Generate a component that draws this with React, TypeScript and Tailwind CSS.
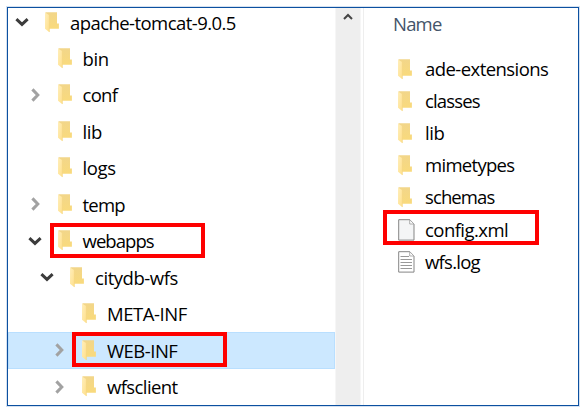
type Toggle = 'open' | 'closed' | 'none';

function Folder() {
  return (
    <svg className="block shrink-0" width="15" height="21" viewBox="0 0 15 21">
      <defs>
        <linearGradient id="flap" x1="0" y1="0" x2="1" y2="1">
          <stop offset="0" stopColor="#ffeebb" />
          <stop offset="1" stopColor="#ffe08a" />
        </linearGradient>
        <linearGradient id="back" x1="0" y1="0" x2="0" y2="1">
          <stop offset="0" stopColor="#f2d68a" />
          <stop offset="1" stopColor="#f9da7c" />
        </linearGradient>
      </defs>
      <path d="M.5 .3H12V11.6H13.9V16.8H4.5L.5 16.8Z" fill="url(#back)" />
      <path d="M0 .5 4.4 3.2V20.2L0 16.8Z" fill="url(#flap)" />
      <path d="M4.4 3.2V20" stroke="#f1d382" strokeWidth=".6" />
    </svg>
  );
}

function Doc({ lined }: { lined?: boolean }) {
  return (
    <svg className="block shrink-0" width="17" height="22" viewBox="0 0 17 22">
      <path d="M.7.7H11.8L16 5V21.1H.7Z" fill={lined ? '#fff' : '#f4f5f6'} stroke="#858585" strokeWidth="1" />
      <path d="M11.7.9V5H15.8" fill="#fff" stroke="#999" strokeWidth=".8" />
      {lined && <path d="M2.5 5.5H11M2.5 8.5H14M2.5 11.5H14M2.5 14.5H14M2.5 17.5H14" stroke="#999" strokeWidth="1.2" />}
    </svg>
  );
}

function Chevron({ state }: { state: Toggle }) {
  return (
    <svg className="block shrink-0" width="16" height="16" viewBox="0 0 16 16" fill="none" strokeWidth="3">
      {state === 'open' && <path d="M2.4 5.2 8 10.4 13.6 5.2" stroke="#3c3c3c" />}
      {state === 'closed' && <path d="M5.4 2.4 10.8 8 5.4 13.6" stroke="#a2a2a2" />}
    </svg>
  );
}

type TreeRow = { label: string; toggle: Toggle; indent: string; row?: string; spacing: string; boxed?: boolean };

const tree: TreeRow[] = [
  { label: 'apache-tomcat-9.0.5', toggle: 'open', indent: 'pl-[6px]', row: 'h-[32px] pb-[4px]', spacing: 'tracking-[-0.56px]' },
  { label: 'bin', toggle: 'none', indent: 'pl-[18.5px]', spacing: 'tracking-[-0.4px]' },
  { label: 'conf', toggle: 'closed', indent: 'pl-[18.5px]', spacing: 'tracking-[-0.7px]' },
  { label: 'lib', toggle: 'none', indent: 'pl-[18.5px]', spacing: 'tracking-[-0.4px]' },
  { label: 'logs', toggle: 'none', indent: 'pl-[18.5px]', spacing: 'tracking-[-0.4px]' },
  { label: 'temp', toggle: 'closed', indent: 'pl-[18.5px]', spacing: 'tracking-[-0.8px]' },
  { label: 'webapps', toggle: 'open', indent: 'pl-[18.5px]', spacing: 'tracking-[-0.95px]', boxed: true },
  { label: 'citydb-wfs', toggle: 'open', indent: 'pl-[31px]', spacing: 'tracking-[-0.45px]' },
  { label: 'META-INF', toggle: 'none', indent: 'pl-[43px]', spacing: 'tracking-[-0.45px]' },
  { label: 'WEB-INF', toggle: 'closed', indent: 'pl-[43px]', row: 'h-[36.5px] bg-[#cce8ff] shadow-[inset_0_0_0_1px_#b9dfff]', spacing: 'tracking-[-0.5px]', boxed: true },
  { label: 'wfsclient', toggle: 'closed', indent: 'pl-[43px]', spacing: 'tracking-[-0.6px]' },
];

const files = [
  { label: 'ade-extensions', kind: 'folder', spacing: 'tracking-[-0.56px]' },
  { label: 'classes', kind: 'folder', spacing: 'tracking-[-0.85px]' },
  { label: 'lib', kind: 'folder', spacing: 'tracking-[-0.4px]' },
  { label: 'mimetypes', kind: 'folder', spacing: 'tracking-[-0.7px]' },
  { label: 'schemas', kind: 'folder', spacing: 'tracking-[-0.9px]' },
  { label: 'config.xml', kind: 'doc', spacing: 'tracking-[-0.55px]' },
  { label: 'wfs.log', kind: 'log', spacing: 'tracking-[-0.75px]' },
];

export default function App() {
  return (
    <div className="h-[413px] w-[588px] bg-white pl-[7px] pt-[7px] font-['Open_Sans','Noto_Sans',sans-serif] text-[18.5px] text-black">
      <div className="flex h-[399px] w-[572px] overflow-hidden border border-[#0c50a0] shadow-[0_0_0_1px_#d5e1f0]">
        <div className="w-[327px] shrink-0">
          {tree.map((r) => (
            <div key={r.label} className={`relative flex items-center ${r.indent} ${r.row ?? 'h-[36.5px]'}`}>
              <Chevron state={r.toggle} />
              <div className="ml-[15px] flex items-center gap-[10px]">
                <Folder />
                <span className={`whitespace-nowrap pt-px leading-[24px] ${r.spacing}`}>{r.label}</span>
              </div>
              {r.boxed && (
                <div className={`absolute h-[35px] w-[155px] border-4 border-[#fe0000] ${r.label === 'webapps' ? 'left-[42px] top-[0.5px]' : 'left-[64px] top-0'}`} />
              )}
            </div>
          ))}
        </div>
        <div className="flex w-[26px] shrink-0 justify-center border-x border-[#f6f6f6] bg-[#eee] pt-[5px]">
          <svg width="10" height="8" viewBox="0 0 10 8" fill="none">
            <path d="M1 6 5 2 9 6" stroke="#444" strokeWidth="2" />
          </svg>
        </div>
        <div className="ml-[2px] flex-1 border-l border-[#eee]">
          <div className="h-[45px] pl-[29px] pt-[4px] leading-[24px] tracking-[-0.8px] text-[#44546a]">Name</div>
          {files.map((f) => (
            <div key={f.label} className="relative flex h-[32.1px] items-center pl-[34px]">
              <div className="w-[27px]">{f.kind === 'folder' ? <Folder /> : <Doc lined={f.kind === 'log'} />}</div>
              <span className={`whitespace-nowrap leading-[24px] ${f.spacing}`}>{f.label}</span>
              {f.kind === 'doc' && <div className="absolute left-[18.5px] top-[-3.5px] h-[35px] w-[156px] border-4 border-[#fe0000]" />}
            </div>
          ))}
        </div>
      </div>
    </div>
  );
}
